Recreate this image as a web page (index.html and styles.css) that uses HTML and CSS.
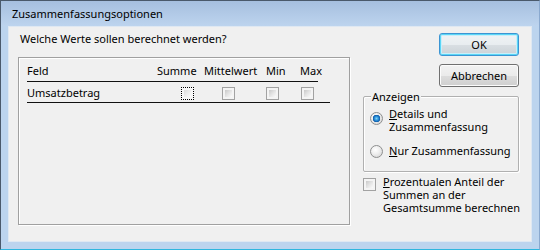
FILE: index.html
```html
<!DOCTYPE html>
<html lang="de">
<head>
<meta charset="utf-8">
<title>Zusammenfassungsoptionen</title>
<link rel="stylesheet" href="styles.css">
</head>
<body>
<div class="window">
  <div class="titlebar">Zusammenfassungsoptionen</div>
  <div class="client">
    <div class="main">
      <div class="question">Welche Werte sollen berechnet werden?</div>
      <div class="listbox">
        <div class="grid head">
          <span>Feld</span>
          <span>Summe</span>
          <span>Mittelwert</span>
          <span>Min</span>
          <span>Max</span>
        </div>
        <div class="grid row">
          <span>Umsatzbetrag</span>
          <span class="cell c-sum"><span class="cb focus"></span></span>
          <span class="cell c-avg"><span class="cb"></span></span>
          <span class="cell c-min"><span class="cb"></span></span>
          <span class="cell c-max"><span class="cb"></span></span>
        </div>
      </div>
    </div>
    <div class="side">
      <button class="btn default">OK</button>
      <button class="btn cancel">Abbrechen</button>
      <div class="group">
        <span class="legend">Anzeigen</span>
        <div class="opt opt1">
          <span class="radio checked"></span>
          <span class="label"><u>D</u>etails und<br>Zusammenfassung</span>
        </div>
        <div class="opt opt2">
          <span class="radio"></span>
          <span class="label"><u>N</u>ur Zusammenfassung</span>
        </div>
      </div>
      <div class="pct">
        <span class="cb"></span>
        <span class="label"><u>P</u>rozentualen Anteil der<br>Summen an der<br>Gesamtsumme berechnen</span>
      </div>
    </div>
  </div>
</div>
</body>
</html>
```
FILE: styles.css
```css
html, body {
  margin: 0;
  padding: 0;
}
body {
  font-family: "Noto Sans", "Open Sans", sans-serif;
  font-size: 11px;
  color: #000;
  background: #fff;
}
.window {
  width: 540px;
  height: 250px;
  box-sizing: border-box;
  border: 1px solid #4a596b;
  border-right-color: #8aa9cf;
  border-bottom-color: #2fb6de;
  background: #bcd4ee;
  display: flex;
  flex-direction: column;
}
.titlebar {
  height: 25px;
  line-height: 26px;
  padding-left: 11px;
  background: linear-gradient(#a6bfdf, #bdd4ee);
  white-space: nowrap;
}
.client {
  margin: 0 7px;
  height: 216px;
  background: #f0f0f0;
  box-shadow: inset 0 0 0 1px #dfe8f2;
  display: flex;
}
.main {
  padding: 5px 0 0 10px;
  width: 332px;
}
.question {
  line-height: 16px;
  padding-left: 2px;
  white-space: nowrap;
}
.listbox {
  margin-top: 10px;
  height: 168px;
  box-sizing: border-box;
  border: 1px solid #a0a0a0;
  box-shadow: inset 1px 1px 0 #fff, 1px 1px 0 #fff;
  padding-left: 8px;
}
.grid {
  display: grid;
  grid-template-columns: 130px 47px 62px 34px 1fr;
  white-space: nowrap;
}
.head {
  width: 291px;
  padding: 6px 0 3px;
  line-height: 14px;
  border-bottom: 1px solid #111;
}
.row {
  width: 303px;
  padding: 4px 0 2px;
  line-height: 14px;
  border-bottom: 1px solid #111;
  align-items: center;
}
.cell {
  display: flex;
  align-items: center;
  height: 14px;
}
.c-sum { padding-left: 24px; }
.c-avg { padding-left: 18px; }
.c-min { padding-left: 0; }
.c-max { padding-left: 1px; }
.cb {
  display: inline-block;
  width: 13px;
  height: 13px;
  box-sizing: border-box;
  border: 1px solid #a2a2a2;
  background: linear-gradient(135deg, #c9c9c9 0%, #e4e4e4 50%, #fbfbfb 100%) content-box, #f4f4f4;
  padding: 2px;
  flex: none;
}
.cb.focus {
  border: 1px dotted #000;
  background: linear-gradient(135deg, #dcdcdc 0%, #eeeeee 50%, #fdfdfd 100%) content-box, #f7f7f7;
}
.side {
  width: 156px;
  margin-left: 13px;
  padding-top: 7px;
  display: flex;
  flex-direction: column;
}
.btn {
  align-self: flex-end;
  width: 80px;
  height: 23px;
  box-sizing: border-box;
  font: inherit;
  color: #000;
  padding: 0;
  border: 1px solid #707070;
  border-radius: 3px;
  background: linear-gradient(#f2f2f2 0%, #ebebeb 50%, #dddddd 51%, #cfcfcf 100%);
  box-shadow: inset 0 0 0 1px #fcfcfc;
}
.btn.default {
  border-color: #3c95d3;
  box-shadow: inset 0 0 0 1px #5ad6f6, inset 0 0 0 2px #c9eefa;
  background: linear-gradient(#f0f3f5 0%, #e8edf0 50%, #d9dfe3 51%, #cbd2d7 100%);
}
.btn.cancel {
  margin-top: 8px;
}
.group {
  position: relative;
  margin-top: 9px;
  height: 76px;
  box-sizing: border-box;
  border: 1px solid #b0b0b0;
  border-radius: 2px;
  box-shadow: inset 1px 1px 0 #fff, 1px 1px 0 #fff;
  padding: 10px 0 0 6px;
}
.legend {
  position: absolute;
  top: -7px;
  left: 7px;
  padding: 0 1px;
  line-height: 14px;
  background: #f0f0f0;
}
.opt {
  display: flex;
  align-items: flex-start;
  line-height: 13px;
  white-space: nowrap;
}
.opt2 {
  margin-top: 11px;
}
.radio {
  width: 13px;
  height: 13px;
  box-sizing: border-box;
  border-radius: 50%;
  border: 1px solid #8e8f8f;
  background: radial-gradient(circle at 40% 35%, #ffffff 0%, #f0f0f0 40%, #cfcfcf 100%);
  flex: none;
  margin-right: 6px;
}
.opt1 .radio { margin-top: 5px; }
.opt2 .radio { margin-top: 1px; }
.radio.checked {
  background:
    radial-gradient(circle at 50% 50%, #7fd5f8 0, #2a8fd8 2px, #0d5aa8 3.5px, rgba(13,90,168,0) 4px),
    radial-gradient(circle at 40% 35%, #ffffff 0%, #eeeeee 40%, #cfcfcf 100%);
}
.pct {
  display: flex;
  align-items: flex-start;
  margin-top: 3px;
  line-height: 13px;
  white-space: nowrap;
}
.pct .cb {
  margin-top: 3px;
  margin-right: 7px;
}
u {
  text-decoration: underline;
  text-underline-offset: 1px;
}
```
